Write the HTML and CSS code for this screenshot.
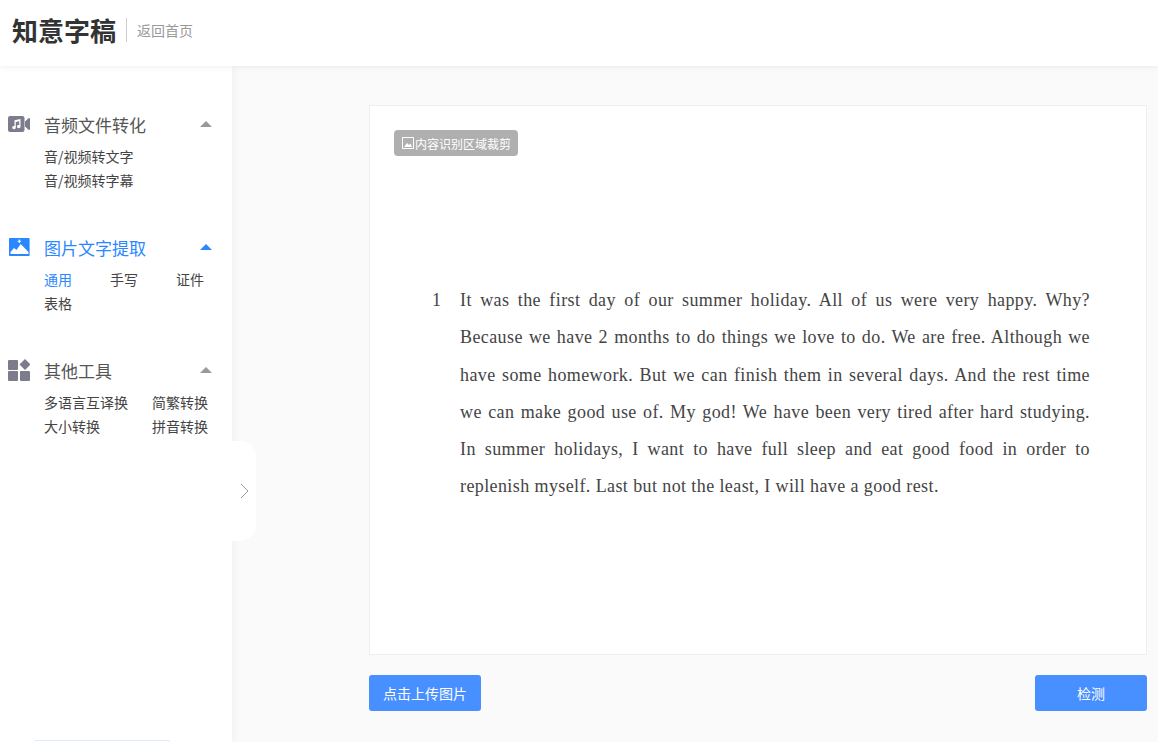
FILE: index.html
```html
<!DOCTYPE html>
<html lang="zh-CN">
<head>
<meta charset="utf-8">
<title>知意字稿</title>
<link rel="stylesheet" href="styles.css">
</head>
<body>
<header class="topbar">
  <span class="logo">知意字稿</span>
  <a class="home-link">返回首页</a>
</header>
<div class="layout">
  <aside class="sidebar">
    <section class="group">
      <div class="group-head">
        <svg class="group-icon" viewBox="0 -3 22 22"><path fill="#7d7c8c" d="M2 0h12.500a2 2 0 0 1 2 2v12a2 2 0 0 1-2 2H2a2 2 0 0 1-2-2V2a2 2 0 0 1 2-2zM17 5.500 20.500 2.200Q22 1.300 22 3v10q0 1.700-1.500.8L17 10.500z"/><path fill="#fff" d="M6.500 4.200 12.500 3v7.500a1.800 1.600 0 1 1-1.300-1.500V5.300L7.800 6v5.500a1.800 1.600 0 1 1-1.300-1.500z"/></svg>
        <h2 class="group-title">音频文件转化</h2>
        <span class="caret"></span>
      </div>
      <ul class="links links-1">
        <li>音/视频转文字</li>
        <li>音/视频转字幕</li>
      </ul>
    </section>
    <section class="group group-active">
      <div class="group-head">
        <svg class="group-icon" viewBox="-1 -2 22 22"><path fill="#2a87ff" d="M.8 0h19a.8.8 0 0 1 .8.8v16.400a.8.8 0 0 1-.8.8H.8a.8.8 0 0 1-.8-.8V.8A.8.8 0 0 1 .8 0z"/><path fill="#fff" d="M1.500 16v-2L5 10l2.500 2 4.200-6 7.800 8v2z"/><path fill="#fff" d="M9.800 1.500h1v1.300h1.200v1h-1.200v1.300h-1V3.800H8.600v-1h1.200z"/></svg>
        <h2 class="group-title">图片文字提取</h2>
        <span class="caret"></span>
      </div>
      <ul class="links links-3">
        <li class="current">通用</li>
        <li>手写</li>
        <li>证件</li>
        <li>表格</li>
      </ul>
    </section>
    <section class="group">
      <div class="group-head">
        <svg class="group-icon" viewBox="0 0 22 22"><g fill="#7d7c8c"><rect x="0" y="1" width="10" height="10" rx="1"/><rect x="0" y="12" width="10" height="10" rx="1"/><rect x="12" y="12" width="10" height="10" rx="1"/><path d="M17 0l5.500 5.500L17 11l-5.500-5.500z"/></g></svg>
        <h2 class="group-title">其他工具</h2>
        <span class="caret"></span>
      </div>
      <ul class="links links-2">
        <li>多语言互译换</li>
        <li>简繁转换</li>
        <li>大小转换</li>
        <li>拼音转换</li>
      </ul>
    </section>
    <div class="sidebar-foot"></div>
    <button class="collapse" type="button" aria-label="展开">
      <svg viewBox="0 0 8 16" width="8" height="16"><path fill="none" stroke="#999" stroke-width="1" d="M1 1l7 7-7 7"/></svg>
    </button>
  </aside>
  <main class="content">
    <div class="paper">
      <div class="crop-tag">
        <svg class="crop-icon" viewBox="0 0 12 12"><path fill="none" stroke="#fff" stroke-width="1" d="M.5.500h11v11H.500z"/><path fill="#fff" d="M2 10 5 6l2 2 1.500-1.500L10 10z"/></svg>
        <span>内容识别区域裁剪</span>
      </div>
      <div class="doc">
        <span class="line-no">1</span>
        <p class="doc-text">It was the first day of our summer holiday. All of us were very happy. Why? Because we have 2 months to do things we love to do. We are free. Although we have some homework. But we can finish them in several days. And the rest time we can make good use of. My god! We have been very tired after hard studying. In&nbsp;summer holidays, I want to have full sleep and eat good food in order to replenish myself. Last but not the least, I will have a good rest.</p>
      </div>
    </div>
    <div class="actions">
      <button class="btn btn-upload" type="button">点击上传图片</button>
      <button class="btn btn-check" type="button">检测</button>
    </div>
  </main>
</div>
</body>
</html>
```
FILE: styles.css
```css
* { box-sizing: border-box; }
html, body { height: 100%; }
body {
  margin: 0;
  overflow: hidden;
  background: #fafafa;
  color: #333;
  font-family: "Noto Sans CJK SC", "Liberation Sans", sans-serif;
}
.topbar {
  position: relative;
  z-index: 2;
  display: flex;
  align-items: center;
  height: 66px;
  padding: 0 12px 6px;
  background: #fff;
  box-shadow: 0 1px 6px rgba(0, 0, 0, .07);
}
.logo {
  font-size: 26px;
  font-weight: 700;
  color: #333;
  line-height: 1;
}
.home-link {
  margin-left: 10px;
  padding-left: 10px;
  border-left: 1px solid #ccc;
  font-size: 14px;
  line-height: 24px;
  color: #999;
}
.layout {
  display: flex;
  height: 676px;
}
.sidebar {
  position: relative;
  flex: 0 0 232px;
  padding: 42px 0 0 8px;
  background: #fff;
  box-shadow: 2px 0 6px rgba(0, 0, 0, .04);
}
.group { height: 123px; }
.group-head {
  display: flex;
  align-items: center;
  height: 32px;
}
.group-icon {
  flex: 0 0 22px;
  width: 22px;
  height: 22px;
}
.group-title {
  flex: 0 0 156px;
  margin: 0 0 0 14px;
  font-size: 17px;
  font-weight: 400;
  color: #555;
}
.caret {
  width: 0;
  height: 0;
  border: 6px solid transparent;
  border-top: 0;
  border-bottom-color: #999;
}
.links {
  display: grid;
  margin: 0;
  padding: 4px 0 0 36px;
  list-style: none;
  font-size: 14px;
  line-height: 24px;
  color: #444;
}
.links-1 { grid-template-columns: 1fr; }
.links-2 { grid-template-columns: 108px 56px; }
.links-3 { grid-template-columns: 66px 66px 28px; }
.group-active .group-title,
.current { color: #2a87ff; }
.group-active .caret { border-bottom-color: #2a87ff; }
.sidebar-foot {
  position: absolute;
  left: 34px;
  bottom: 0;
  width: 136px;
  height: 2px;
  border: 1px solid #dcebff;
  border-bottom: 0;
  border-radius: 4px 4px 0 0;
}
.collapse {
  position: absolute;
  top: 375px;
  left: 232px;
  display: flex;
  align-items: center;
  justify-content: center;
  width: 24px;
  height: 100px;
  padding: 0;
  border: 0;
  border-radius: 0 16px 16px 0;
  background: #fff;
}
.content {
  flex: 1;
  padding: 39px 11px 0 137px;
}
.paper {
  height: 550px;
  padding: 24px;
  border: 1px solid #eee;
  background: #fff;
}
.crop-tag {
  display: inline-flex;
  align-items: center;
  height: 26px;
  padding: 0 7px 0 8px;
  border-radius: 4px;
  background: #afafaf;
  font-size: 12px;
  color: #fff;
}
.crop-icon {
  width: 12px;
  height: 12px;
  margin-right: 1px;
}
.doc {
  display: flex;
  margin-top: 126px;
  padding-left: 38px;
  font-family: "Liberation Serif", serif;
  font-size: 18px;
  line-height: 37.300px;
  letter-spacing: .4px;
  color: #444;
}
.line-no { flex: 0 0 28px; }
.doc-text {
  flex: 1;
  margin: 0 32px 0 0;
  text-align: justify;
}
.actions {
  display: flex;
  justify-content: space-between;
  margin-top: 20px;
}
.btn {
  height: 36px;
  border: 0;
  border-radius: 3px;
  background: #488fff;
  color: #fff;
  font: 14px "Noto Sans CJK SC", sans-serif;
}
.btn-upload { width: 112px; }
.btn-check { width: 112px; }
```
